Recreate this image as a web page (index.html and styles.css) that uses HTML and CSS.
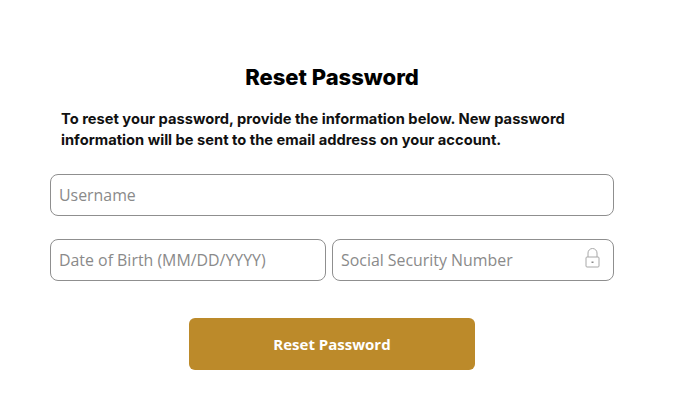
FILE: index.html
```html
<!DOCTYPE html>
<html lang="en">
  <head>
    <meta charset="UTF-8" />
    <meta name="viewport" content="width=device-width, initial-scale=1.0" />
    <title>Reset Password</title>
    <link rel="stylesheet" href="styles.css">
  </head>
  <body>
    <div class="container">
      <h2>Reset Password</h2>
      <p class="intro">To reset your password, provide the information below. New password information will be sent to the email address on your account.</p>
      <div class="field field-full">
        <span class="placeholder">Username</span>
      </div>
      <div class="form-row">
        <div class="field field-dob">
          <span class="placeholder">Date of Birth (MM/DD/YYYY)</span>
        </div>
        <div class="field">
          <span class="placeholder">Social Security Number</span>
          <svg class="lock" width="15" height="20" viewBox="0 0 15 20" fill="none" stroke="#a8a8a8" stroke-width="1">
            <path d="M3 9V5a4.5 4.5 0 0 1 9 0V9" />
            <rect x="1" y="9" width="13" height="10" rx="1" />
            <path d="M7.5 13.5v1.5" stroke="#8a8a8a" stroke-width="2" />
          </svg>
        </div>
      </div>
      <button class="button2">Reset Password</button>
    </div>
  </body>
</html>
```

FILE: styles.css
```css
/* Reset */
* {
  margin: 0;
  padding: 0;
  box-sizing: border-box;
}

body {
  background: #fff;
  font-family: "Open Sans", sans-serif;
}

.container {
  width: 564px;
  margin-left: 50px;
  padding-top: 62px;
}

h2 {
  font-family: Inter, sans-serif;
  font-size: 22px;
  line-height: 30px;
  font-weight: 800;
  color: #000;
  text-align: center;
}

.intro {
  margin: 17px 0 23px;
  padding: 0 11px;
  font-family: Inter, sans-serif;
  font-size: 14.7px;
  line-height: 21px;
  font-weight: 700;
  color: #111;
}

.field {
  flex: 1;
  height: 42px;
  padding: 0 8px;
  display: flex;
  align-items: center;
  justify-content: space-between;
  border: 1px solid #8f8f8f;
  border-radius: 8px;
}

.field-full {
  margin-bottom: 23px;
}

.field-dob {
  flex: 0 0 276px;
}

.placeholder {
  font-size: 15.9px;
  color: #8a8a8a;
}

.form-row {
  display: flex;
  gap: 6px;
}

.lock {
  margin: 0 5px 5px 0;
}

.button2 {
  display: block;
  width: 286px;
  height: 52px;
  margin: 37px auto 0;
  border: none;
  border-radius: 6px;
  background-color: #bc8a2a;
  color: #fff;
  font-family: "Open Sans", sans-serif;
  font-size: 15px;
  font-weight: 700;
}
```
